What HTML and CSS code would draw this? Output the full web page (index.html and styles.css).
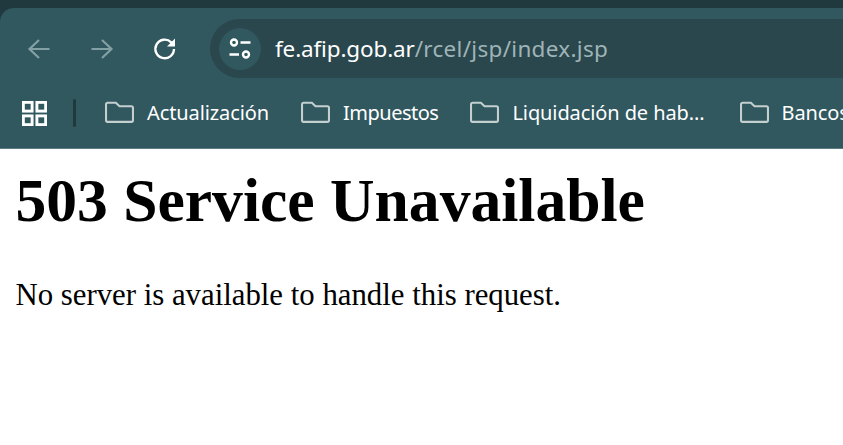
FILE: index.html
```html
<!DOCTYPE html>
<html lang="es">
<head>
<meta charset="utf-8">
<title>503 Service Unavailable</title>
<link rel="stylesheet" href="styles.css">
</head>
<body>
<header class="chrome">
  <div class="panel">
    <div class="toolbar">
      <svg class="nav nav-back" viewBox="0 0 24 24"><path d="M22.500 12H2.500M12 3 2.500 12l9.500 9"/></svg>
      <svg class="nav nav-forward" viewBox="0 0 24 24"><path d="M1.500 12h20M12 3l9.500 9-9.500 9"/></svg>
      <svg class="nav nav-reload" viewBox="0 0 24 24"><path d="M21 12a9.300 9.300 0 1 1-2.800-6.700L21 8"/><path class="solid" d="M22 1.500v8h-8z"/></svg>
      <div class="omnibox">
        <span class="site-chip">
          <svg class="tune" viewBox="0 0 24 24"><circle cx="6" cy="5.500" r="3"/><path d="M12.500 5.500H22.500M1.500 17.500h9.500"/><circle cx="18" cy="17.500" r="3"/></svg>
        </span>
        <span class="url"><span class="host">fe.afip.gob.ar</span><span class="path">/rcel/jsp/index.jsp</span></span>
      </div>
    </div>
    <nav class="bookmarks">
      <svg class="apps" viewBox="0 0 24 24"><rect x="1.300" y="1.300" width="8.400" height="8.400"/><rect x="14.300" y="1.300" width="8.400" height="8.400"/><rect x="1.300" y="14.300" width="8.400" height="8.400"/><rect x="14.300" y="14.300" width="8.400" height="8.400"/></svg>
      <span class="divider"></span>
      <a class="bookmark"><svg class="folder" viewBox="0 0 28 21"><path d="M1 3a1.500 1.500 0 0 1 1.500-1.500h8L14 5h11.500A1.500 1.500 0 0 1 27 6.500V18.500a1.500 1.500 0 0 1-1.500 1.500h-23A1.500 1.500 0 0 1 1 18.500z"/></svg>Actualización</a>
      <a class="bookmark bookmark-narrow"><svg class="folder" viewBox="0 0 28 21"><path d="M1 3a1.500 1.500 0 0 1 1.500-1.500h8L14 5h11.500A1.500 1.500 0 0 1 27 6.500V18.500a1.500 1.500 0 0 1-1.500 1.500h-23A1.500 1.500 0 0 1 1 18.500z"/></svg>Impuestos</a>
      <a class="bookmark bookmark-elided"><svg class="folder" viewBox="0 0 28 21"><path d="M1 3a1.500 1.500 0 0 1 1.500-1.500h8L14 5h11.500A1.500 1.500 0 0 1 27 6.500V18.500a1.500 1.500 0 0 1-1.500 1.500h-23A1.500 1.500 0 0 1 1 18.500z"/></svg>Liquidación de hab...</a>
      <a class="bookmark"><svg class="folder" viewBox="0 0 28 21"><path d="M1 3a1.500 1.500 0 0 1 1.500-1.500h8L14 5h11.500A1.500 1.500 0 0 1 27 6.500V18.500a1.500 1.500 0 0 1-1.500 1.500h-23A1.500 1.500 0 0 1 1 18.500z"/></svg>Bancos</a>
    </nav>
  </div>
</header>
<main class="page">
  <h1>503 Service Unavailable</h1>
  <p>No server is available to handle this request.</p>
</main>
</body>
</html>
```
FILE: styles.css
```css
* { box-sizing: border-box; }
html, body { margin: 0; height: 100%; overflow: hidden; background: #fff; }
.chrome { background: #20393e; padding-top: 8px; }
.panel {
  height: 141px;
  background: #31575f;
  border-bottom: 1px solid #5a7a80;
  border-top-left-radius: 14px;
  overflow: hidden;
  font-family: "Noto Sans", "Open Sans", sans-serif;
}
.toolbar { display: flex; align-items: center; height: 70px; padding-top: 11px; padding-left: 27px; }
.nav { width: 24px; height: 24px; fill: none; stroke: #83a0a4; stroke-width: 2.200; margin-right: 39px; flex: none; }
.nav-reload { stroke: #fff; margin-right: 33px; stroke-width: 2.400; }
.nav-reload .solid { fill: #fff; stroke: none; }
.omnibox {
  flex: none;
  display: flex;
  align-items: center;
  width: 700px;
  height: 59px;
  padding-left: 9px;
  background: #2a474d;
  border-radius: 30px 0 0 30px;
}
.site-chip {
  width: 42px; height: 42px; border-radius: 50%;
  background: #31575f;
  display: flex; align-items: center; justify-content: center;
  flex: none;
}
.tune { width: 24px; height: 24px; fill: none; stroke: #fff; stroke-width: 2.400; }
.url { margin-left: 14px; font-size: 22.500px; color: #9fb4b7; white-space: nowrap; }
.host { color: #fff; letter-spacing: -0.150px; }
.path { letter-spacing: 0.300px; }
.bookmarks { display: flex; align-items: center; height: 70px; padding-left: 22px; white-space: nowrap; }
.apps { width: 25px; height: 25px; fill: none; stroke: #fff; stroke-width: 2.800; flex: none; }
.divider { width: 3px; height: 28px; border-radius: 2px; background: #1f3a3f; margin: 0 29px 0 26px; flex: none; }
.bookmark { display: flex; align-items: center; color: #fff; font-size: 20px; margin: 0 32px 2px 0; letter-spacing: -0.100px; }
.bookmark-narrow { letter-spacing: -0.500px; }
.bookmark-elided { margin-right: 35px; }
.folder { width: 29px; height: 22px; fill: none; stroke: #c4cfd0; stroke-width: 2; margin-right: 13px; flex: none; }
.page { padding: 0 15.400px; font-family: "Liberation Serif", serif; color: #000; }
h1 { font-size: 61.600px; line-height: 70px; margin: 16px 0 0; font-weight: 700; }
p { font-size: 30.800px; line-height: 35px; margin: 43px 0 0; }
```
